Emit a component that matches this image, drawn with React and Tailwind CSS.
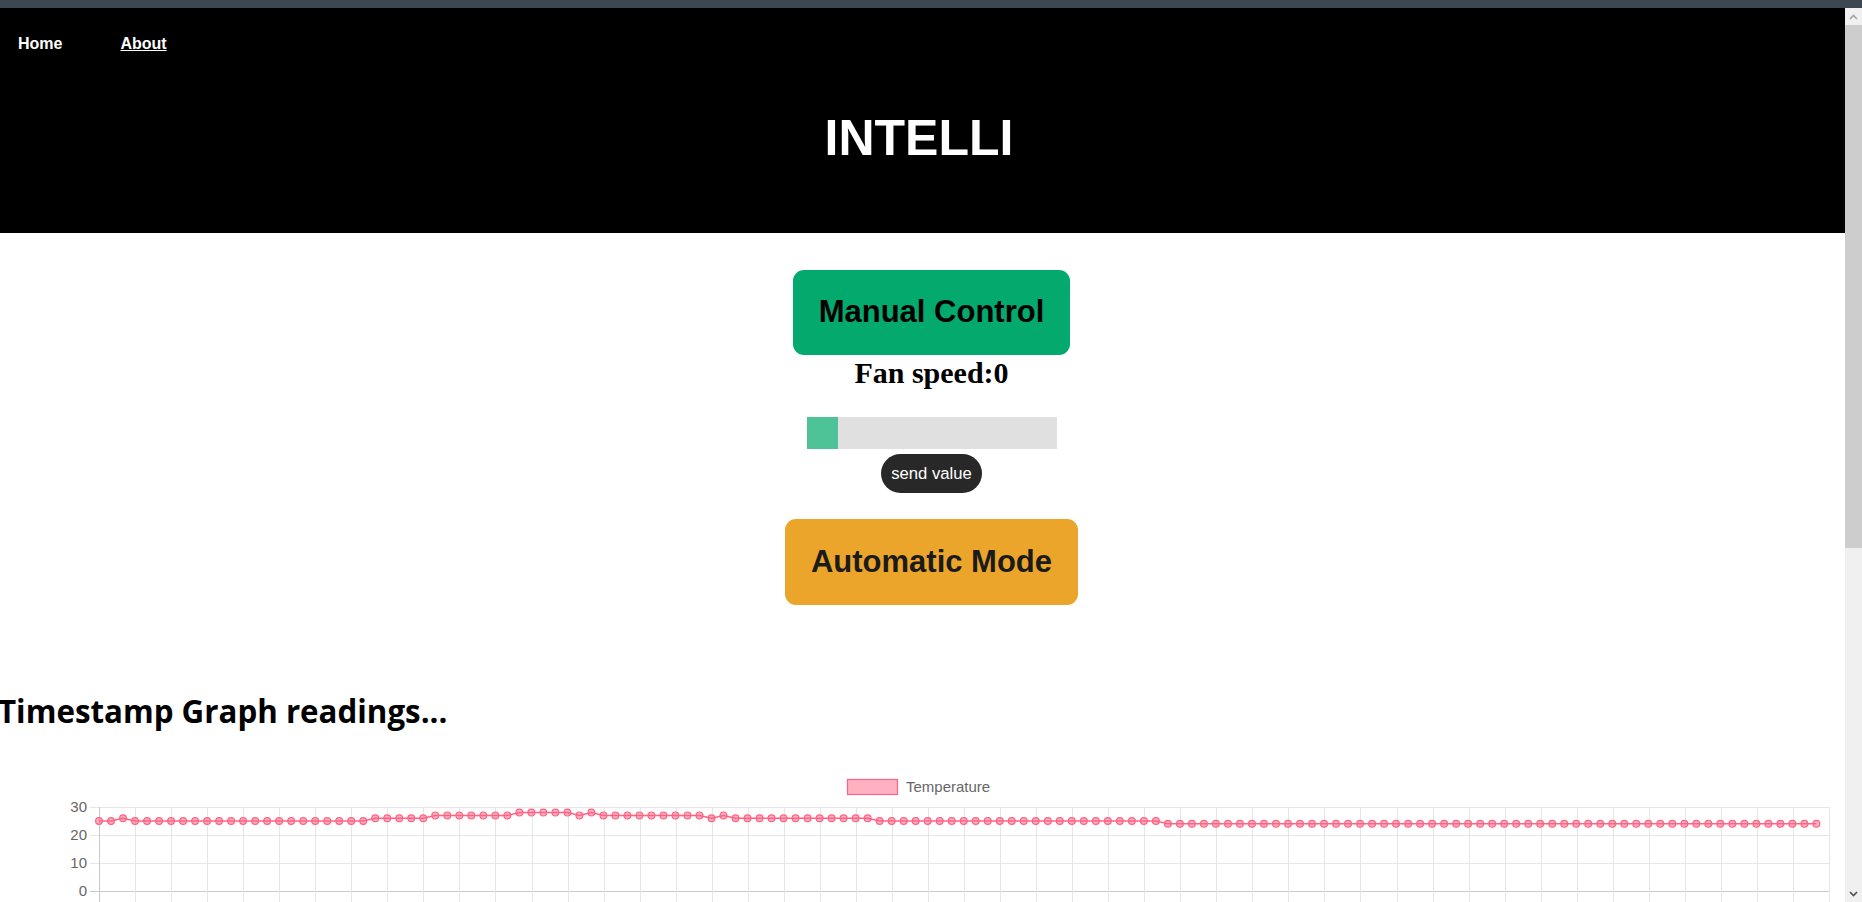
import React from "react";

const temps = [
  25, 25, 26,
  ...Array(20).fill(25),
  ...Array(5).fill(26),
  ...Array(7).fill(27),
  ...Array(5).fill(28),
  27, 28,
  ...Array(9).fill(27),
  26, 27,
  ...Array(12).fill(26),
  ...Array(24).fill(25),
  ...Array(55).fill(24),
];

function Chart() {
  const left = 99;
  const right = 1829;
  const yOf = (v) => 131 - v * 2.8;
  const step = 12.01;
  const vLines = [];
  for (let k = 0; k <= 48; k++) vLines.push(left + k * ((right - left) / 48));
  const pts = temps.map((v, i) => [left + i * step, yOf(v)]);

  return (
    <svg width="1845" height="142" className="block">
      <rect x="847.5" y="19.5" width="50" height="15" fill="rgba(255,99,132,0.5)" stroke="rgb(255,99,132)" strokeWidth="1.2" />
      <text x="906" y="32" fontSize="15" fill="#666" fontFamily="Liberation Sans, Arial, sans-serif">Temperature</text>

      {[30, 20, 10, 0].map((v) => (
        <g key={v}>
          <line x1="90" x2={right} y1={yOf(v) + 0.5} y2={yOf(v) + 0.5} stroke={v === 0 ? "#c9c9c9" : "#e6e6e6"} strokeWidth="1" />
          <text x="87" y={yOf(v) + 5} textAnchor="end" fontSize="15" fill="#666" fontFamily="Liberation Sans, Arial, sans-serif">{v}</text>
        </g>
      ))}
      {vLines.map((x, i) => (
        <line key={i} x1={Math.round(x) + 0.5} x2={Math.round(x) + 0.5} y1="47" y2="142" stroke={i === 0 ? "#c9c9c9" : "#e6e6e6"} strokeWidth="1" />
      ))}

      <polyline points={pts.map((p) => p.join(",")).join(" ")} fill="none" stroke="rgb(255,99,132)" strokeWidth="1.5" />
      {pts.map(([x, y], i) => (
        <circle key={i} cx={x} cy={y} r="3.4" fill="rgba(255,99,132,0.5)" stroke="rgb(255,99,132)" strokeWidth="1.2" />
      ))}
    </svg>
  );
}

function Scrollbar() {
  return (
    <div className="w-[17px] shrink-0 bg-[#f0f0f0] flex flex-col">
      <div className="h-[17px] flex items-center justify-center">
        <svg width="9" height="6" viewBox="0 0 9 6">
          <polyline points="1,5 4.5,1.5 8,5" fill="none" stroke="#a3a3a3" strokeWidth="1.6" />
        </svg>
      </div>
      <div className="h-[523px] bg-[#cdcdcd]" />
      <div className="flex-1" />
      <div className="h-[17px] flex items-center justify-center">
        <svg width="9" height="6" viewBox="0 0 9 6">
          <polyline points="1,1 4.5,4.5 8,1" fill="none" stroke="#505050" strokeWidth="1.6" />
        </svg>
      </div>
    </div>
  );
}

export default function App() {
  return (
    <div className="h-[902px] w-full overflow-hidden flex flex-col bg-white font-['Liberation_Sans',Arial,sans-serif]">
      <div className="h-[8px] shrink-0 bg-[#3c4751]" />
      <div className="flex flex-1 min-h-0">
        <main className="flex-1 min-w-0 overflow-hidden">
          <header className="h-[225px] bg-black text-white">
            <nav className="flex pt-[27px] text-[16px] leading-[18px] font-bold">
              <a className="ml-[18px]">Home</a>
              <a className="ml-[58px] underline">About</a>
            </nav>
            <h1 className="mt-[57px] pr-[7px] text-center text-[50px] leading-[56px] font-bold">INTELLI</h1>
          </header>

          <section className="flex flex-col items-center pl-[18px]">
            <button className="mt-[37px] w-[277px] h-[85px] rounded-[11px] bg-[#04AA6D] text-black text-[31px] font-bold flex items-center justify-center">
              Manual Control
            </button>
            <h2 className="mt-[1px] font-['Liberation_Serif',serif] text-[30px] leading-[34px] font-bold text-black">Fan speed:0</h2>
            <div role="slider" className="mt-[27px] w-[250px] h-[32px] bg-[#d3d3d3] opacity-70 flex">
              <div className="w-[31px] h-full bg-[#04AA6D]" />
            </div>
            <button className="mt-[5px] w-[101px] h-[39px] rounded-full bg-[#282828] text-white text-[16.67px] flex items-center justify-center">
              send value
            </button>
            <button className="mt-[26px] w-[293px] h-[86px] rounded-[11px] bg-[#eba52b] text-[#1b1b1b] text-[31px] font-bold flex items-center justify-center">
              Automatic Mode
            </button>
          </section>

          <h2 className="mt-[86px] ml-[-2px] font-['Open_Sans',sans-serif] text-[31.3px] leading-[40px] font-bold text-black whitespace-nowrap">
            Timestamp Graph readings...
          </h2>

          <div className="mt-[29px]">
            <Chart />
          </div>
        </main>
        <Scrollbar />
      </div>
    </div>
  );
}
